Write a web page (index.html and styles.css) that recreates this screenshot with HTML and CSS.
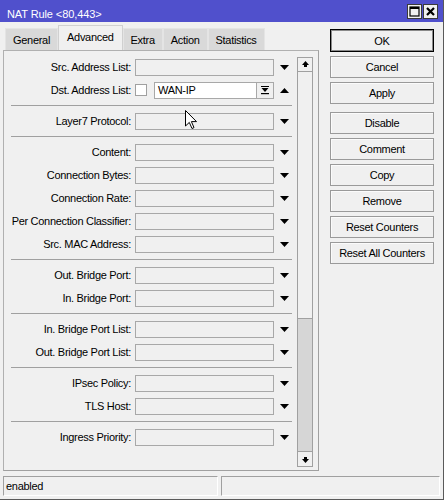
FILE: index.html
```html
<!DOCTYPE html>
<html>
<head>
<meta charset="utf-8">
<link rel="stylesheet" href="styles.css">
</head>
<body>
<div class="window">
  <div class="titlebar">
    <span class="title">NAT Rule &lt;80,443&gt;</span>
    <div class="tbtns">
      <span class="tbtn"><svg width="11" height="11" viewBox="0 0 11 11"><rect x="1" y="1" width="9" height="9" fill="none" stroke="#000" stroke-width="1.2"/><rect x="1" y="1" width="9" height="2" fill="#000"/></svg></span>
      <span class="tbtn"><svg width="11" height="11" viewBox="0 0 11 11"><path d="M2 2 L9 9 M9 2 L2 9" stroke="#000" stroke-width="2.2"/></svg></span>
    </div>
  </div>
  <div class="main">
    <div class="left">
      <div class="tabs">
        <div class="tab">General</div>
        <div class="tab active">Advanced</div>
        <div class="tab">Extra</div>
        <div class="tab">Action</div>
        <div class="tab">Statistics</div>
      </div>
      <div class="panel">
        <div class="form">
          <div class="row"><div class="label"><span>Src. Address List:</span></div><div class="field"></div><div class="arrow"><svg width="9" height="5" viewBox="0 0 9 5"><path d="M0 0H9L4.5 5Z"/></svg></div></div>
          <div class="row"><div class="label"><span>Dst. Address List:</span></div>
            <div class="check"></div>
            <div class="input">WAN-IP</div>
            <div class="ibtn"><svg width="8" height="9" viewBox="0 0 8 9"><rect x="0" y="0" width="8" height="1"/><path d="M0.5 2H7.5L4 6Z"/><rect x="3" y="2" width="2" height="2"/><rect x="0" y="7" width="8" height="1.2"/></svg></div>
            <div class="arrow"><svg width="9" height="5" viewBox="0 0 9 5"><path d="M0 5H9L4.5 0Z"/></svg></div></div>
          <div class="sep"></div>
          <div class="row"><div class="label"><span>Layer7 Protocol:</span></div><div class="field"></div><div class="arrow"><svg width="9" height="5" viewBox="0 0 9 5"><path d="M0 0H9L4.5 5Z"/></svg></div></div>
          <div class="sep"></div>
          <div class="row"><div class="label"><span>Content:</span></div><div class="field"></div><div class="arrow"><svg width="9" height="5" viewBox="0 0 9 5"><path d="M0 0H9L4.5 5Z"/></svg></div></div>
          <div class="row"><div class="label"><span>Connection Bytes:</span></div><div class="field"></div><div class="arrow"><svg width="9" height="5" viewBox="0 0 9 5"><path d="M0 0H9L4.5 5Z"/></svg></div></div>
          <div class="row"><div class="label"><span>Connection Rate:</span></div><div class="field"></div><div class="arrow"><svg width="9" height="5" viewBox="0 0 9 5"><path d="M0 0H9L4.5 5Z"/></svg></div></div>
          <div class="row"><div class="label"><span>Per Connection Classifier:</span></div><div class="field"></div><div class="arrow"><svg width="9" height="5" viewBox="0 0 9 5"><path d="M0 0H9L4.5 5Z"/></svg></div></div>
          <div class="row"><div class="label"><span>Src. MAC Address:</span></div><div class="field"></div><div class="arrow"><svg width="9" height="5" viewBox="0 0 9 5"><path d="M0 0H9L4.5 5Z"/></svg></div></div>
          <div class="sep"></div>
          <div class="row"><div class="label"><span>Out. Bridge Port:</span></div><div class="field"></div><div class="arrow"><svg width="9" height="5" viewBox="0 0 9 5"><path d="M0 0H9L4.5 5Z"/></svg></div></div>
          <div class="row"><div class="label"><span>In. Bridge Port:</span></div><div class="field"></div><div class="arrow"><svg width="9" height="5" viewBox="0 0 9 5"><path d="M0 0H9L4.5 5Z"/></svg></div></div>
          <div class="sep"></div>
          <div class="row"><div class="label"><span>In. Bridge Port List:</span></div><div class="field"></div><div class="arrow"><svg width="9" height="5" viewBox="0 0 9 5"><path d="M0 0H9L4.5 5Z"/></svg></div></div>
          <div class="row"><div class="label"><span>Out. Bridge Port List:</span></div><div class="field"></div><div class="arrow"><svg width="9" height="5" viewBox="0 0 9 5"><path d="M0 0H9L4.5 5Z"/></svg></div></div>
          <div class="sep"></div>
          <div class="row"><div class="label"><span>IPsec Policy:</span></div><div class="field"></div><div class="arrow"><svg width="9" height="5" viewBox="0 0 9 5"><path d="M0 0H9L4.5 5Z"/></svg></div></div>
          <div class="row"><div class="label"><span>TLS Host:</span></div><div class="field"></div><div class="arrow"><svg width="9" height="5" viewBox="0 0 9 5"><path d="M0 0H9L4.5 5Z"/></svg></div></div>
          <div class="sep"></div>
          <div class="row"><div class="label"><span>Ingress Priority:</span></div><div class="field"></div><div class="arrow"><svg width="9" height="5" viewBox="0 0 9 5"><path d="M0 0H9L4.5 5Z"/></svg></div></div>
        </div>
        <div class="scroll">
          <div class="sbtn"><svg width="7" height="7" viewBox="0 0 7 7"><path d="M0 4H7L3.5 0Z"/><rect x="2" y="4" width="3" height="2"/></svg></div>
          <div class="thumb"></div>
          <div class="track"></div>
          <div class="sbtn down"><svg width="7" height="7" viewBox="0 0 7 7"><path d="M0 3H7L3.5 7Z"/><rect x="2" y="1" width="3" height="2"/></svg></div>
        </div>
      </div>
    </div>
    <div class="buttons">
      <div class="btn ok">OK</div>
      <div class="btn">Cancel</div>
      <div class="btn">Apply</div>
      <div class="btn spaced">Disable</div>
      <div class="btn">Comment</div>
      <div class="btn">Copy</div>
      <div class="btn">Remove</div>
      <div class="btn">Reset Counters</div>
      <div class="btn">Reset All Counters</div>
    </div>
  </div>
  <div class="status">
    <div class="sbox s1">enabled</div>
    <div class="sbox s2"></div>
  </div>
  <svg class="cursor" width="13" height="20" viewBox="0 0 13 20"><path d="M0.5 0.5 V16 L4.3 12.4 L7 18.5 L9 17.6 L6.4 11.6 H11.5 Z" fill="#fff" stroke="#000" stroke-width="1" stroke-linejoin="miter"/></svg>
</div>
</body>
</html>
```
FILE: styles.css
```css
body {
  margin: 0;
  font-family: "Liberation Sans", Arial, sans-serif;
  font-size: 11px;
  letter-spacing: -0.3px;
  color: #000;
}
.window {
  position: relative;
  width: 444px;
  height: 500px;
  box-sizing: border-box;
  background: #f0f0f0;
  border-right: 1px solid #5a5a5a;
  border-bottom: 1px solid #5a5a5a;
  display: flex;
  flex-direction: column;
}
.titlebar {
  height: 22px;
  flex: none;
  background: #5050cc;
  color: #fff;
  display: flex;
  align-items: flex-start;
}
.title {
  padding: 8px 0 0 7px;
  line-height: 13px;
  letter-spacing: -0.1px;
}
.tbtns {
  margin-left: auto;
  margin-top: 4px;
  margin-right: 5px;
  display: flex;
  gap: 1px;
}
.tbtn {
  width: 15px;
  height: 15px;
  box-sizing: border-box;
  border: 1px solid #3a3a3a;
  background: #f0f0f0;
  display: flex;
  align-items: center;
  justify-content: center;
}
.main {
  display: flex;
  height: 454px;
  flex: none;
}
.left {
  margin-left: 3px;
  width: 316px;
  display: flex;
  flex-direction: column;
}
.tabs {
  display: flex;
  align-items: flex-end;
  height: 25px;
  margin-top: 3px;
  padding-left: 2px;
}
.tab {
  height: 22px;
  box-sizing: border-box;
  padding: 1px 7px 0;
  background: #d9d9d9;
  border: 1px solid #e4e4e4;
  border-bottom: none;
  display: flex;
  align-items: center;
}
.tab.active {
  height: 25px;
  background: #f0f0f0;
  border-color: #d0d0d0;
  padding: 0 8px 3px;
}
.panel {
  height: 421px;
  box-sizing: border-box;
  border: 1px solid #b0b0b0;
  border-right-color: #a0a0a0;
  border-bottom-color: #a0a0a0;
  display: flex;
}
.form {
  width: 289px;
  padding-top: 4px;
}
.row {
  display: flex;
  align-items: center;
  height: 23px;
  padding-top: 1px;
  box-sizing: border-box;
}
.label {
  width: 127px;
  margin-right: 4px;
  display: flex;
  justify-content: flex-end;
  white-space: nowrap;
  flex: none;
}
.field {
  width: 139px;
  height: 17px;
  box-sizing: border-box;
  border: 1px solid #a8a8a8;
  flex: none;
}
.arrow {
  width: 19px;
  padding-left: 6px;
  box-sizing: border-box;
  display: flex;
  flex: none;
}
.check {
  width: 12px;
  height: 12px;
  box-sizing: border-box;
  border: 1px solid #a0a0a0;
  background: #fff;
  margin-right: 7px;
  flex: none;
}
.input {
  width: 103px;
  height: 17px;
  box-sizing: border-box;
  border: 1px solid #a8a8a8;
  background: #fff;
  padding-left: 3px;
  line-height: 15px;
  flex: none;
}
.ibtn {
  width: 17px;
  height: 17px;
  box-sizing: border-box;
  border: 1px solid #a8a8a8;
  border-left: none;
  display: flex;
  align-items: center;
  justify-content: center;
  flex: none;
}
.sep {
  height: 8px;
  display: flex;
  align-items: center;
}
.sep::before {
  content: "";
  flex: 1;
  margin: 0 1px 0 7px;
  border-top: 1px solid #a0a0a0;
}
.scroll {
  margin: 6px 5px 0 4px;
  width: 16px;
  height: 410px;
  display: flex;
  flex-direction: column;
}
.sbtn {
  height: 15px;
  box-sizing: border-box;
  border: 1px solid #a0a0a0;
  background: #f0f0f0;
  display: flex;
  align-items: center;
  justify-content: center;
  flex: none;
}
.sbtn.down {
  height: 16px;
}
.thumb {
  height: 247px;
  box-sizing: border-box;
  border: 1px solid #a0a0a0;
  border-top: none;
  background: #f0f0f0;
  flex: none;
}
.track {
  flex: 1;
  background: #d6d6d6;
  border-left: 1px solid #a0a0a0;
  border-right: 1px solid #a0a0a0;
}
.buttons {
  margin-left: 11px;
  width: 104px;
  padding-top: 7px;
  display: flex;
  flex-direction: column;
  gap: 4px;
}
.btn {
  height: 22px;
  box-sizing: border-box;
  border: 1px solid #9a9a9a;
  box-shadow: inset 1px 1px 0 #fbfbfb;
  background: #f0f0f0;
  display: flex;
  align-items: center;
  justify-content: center;
  flex: none;
}
.btn.ok {
  height: 23px;
  border-color: #000;
  box-shadow: inset 0 0 0 1px #8a8a8a;
}
.btn.spaced {
  margin-top: 4px;
}
.status {
  display: flex;
  height: 20px;
  margin-left: 3px;
  gap: 3px;
  flex: none;
}
.sbox {
  box-sizing: border-box;
  border: 1px solid;
  border-color: #a0a0a0 #ffffff #ffffff #a0a0a0;
  line-height: 18px;
}
.s1 {
  width: 215px;
  padding-left: 2px;
}
.s2 {
  width: 219px;
}
.cursor {
  position: absolute;
  left: 185px;
  top: 110px;
}
```
